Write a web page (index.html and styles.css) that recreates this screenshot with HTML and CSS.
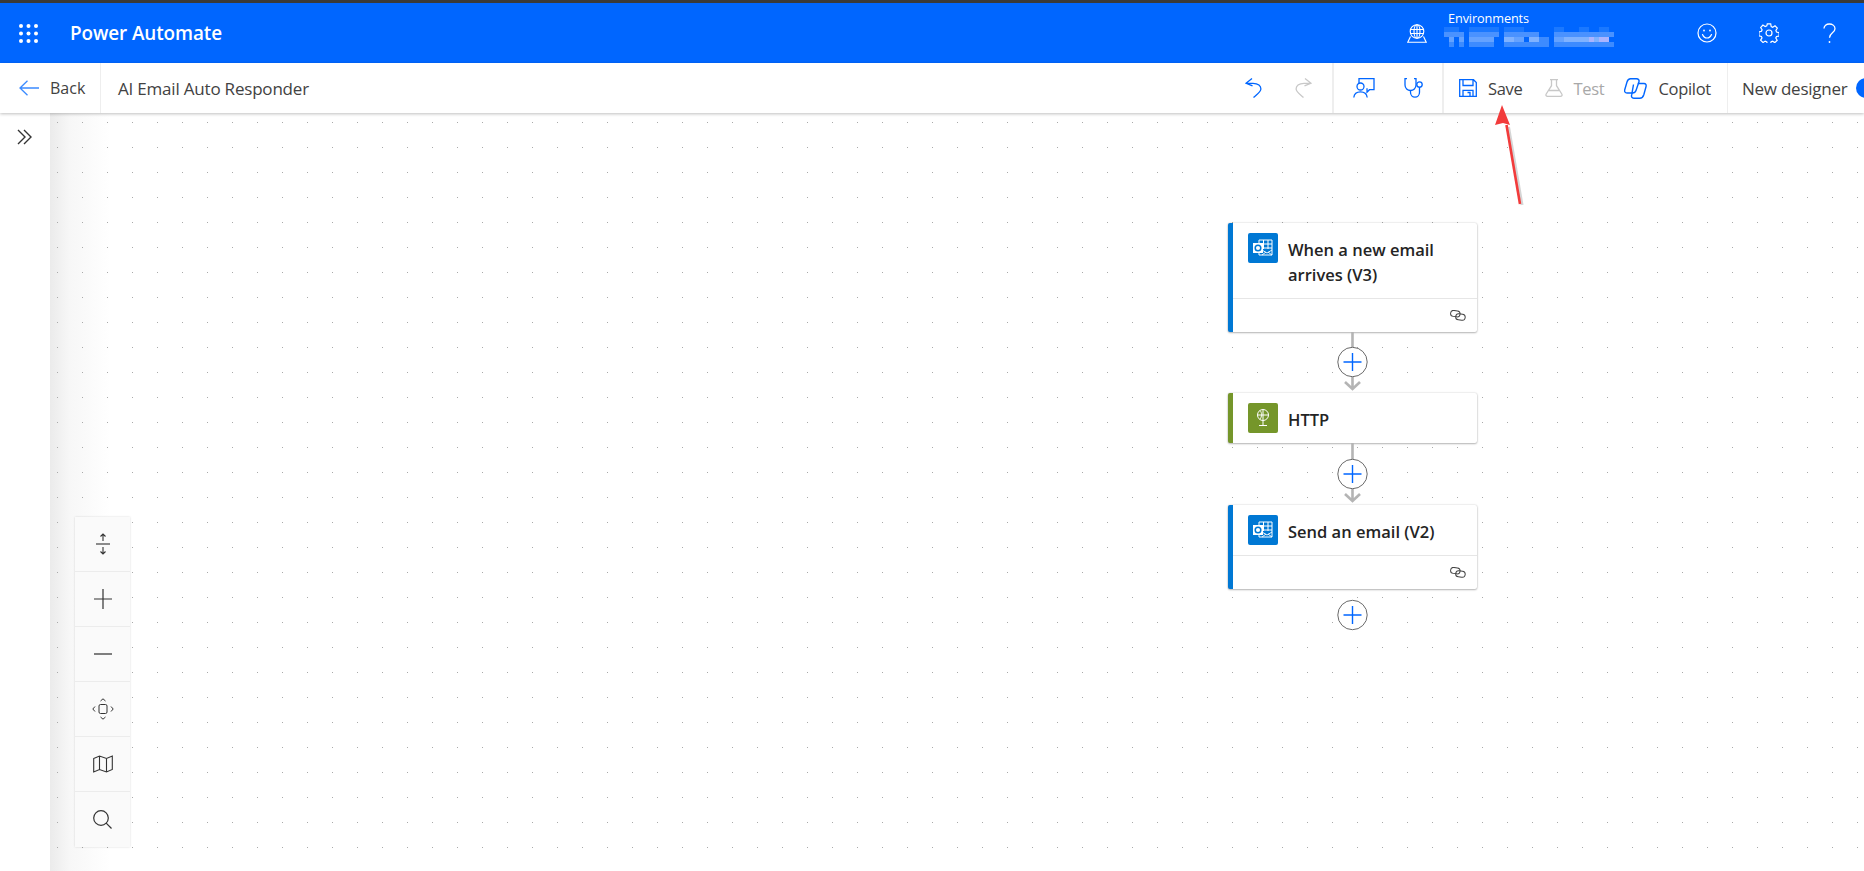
FILE: index.html
```html
<!DOCTYPE html>
<html lang="en">
<head>
<meta charset="utf-8">
<title>Power Automate</title>
<link rel="stylesheet" href="styles.css">
</head>
<body>
<div class="app">
  <div class="topstrip"></div>
  <header class="suite">
    <svg class="waffle" width="19" height="19" viewBox="0 0 19 19" fill="#fff"><circle cx="2" cy="2" r="2"/><circle cx="9.5" cy="2" r="2"/><circle cx="17" cy="2" r="2"/><circle cx="2" cy="9.5" r="2"/><circle cx="9.5" cy="9.5" r="2"/><circle cx="17" cy="9.5" r="2"/><circle cx="2" cy="17" r="2"/><circle cx="9.5" cy="17" r="2"/><circle cx="17" cy="17" r="2"/></svg>
    <span class="brand">Power Automate</span>
    <svg class="env-icon" width="20" height="19" viewBox="0 0 20 19" fill="none" stroke="#fff" stroke-width="1.1"><circle cx="10" cy="7.5" r="6.8"/><ellipse cx="10" cy="7.5" rx="3" ry="6.8"/><path d="M3.4 5.5h13.2M3.4 9.5h13.2M10 .7v13.6M3.5 12.5L.8 18.2h18.4l-2.7-5.7"/></svg>
    <div class="env">
      <span class="env-label">Environments</span>
      <svg class="env-blur" width="175" height="20" viewBox="0 0 35 4" shape-rendering="crispEdges">
        <g fill="#1a78ff"><rect x="0" y="0" width="3" height="1"/><rect x="5" y="0" width="6" height="1"/><rect x="12" y="0" width="4" height="1"/><rect x="22" y="0" width="2" height="1"/><rect x="27" y="0" width="2" height="1"/><rect x="31" y="0" width="2" height="1"/></g>
        <g fill="#4a92ff"><rect x="0" y="1" width="4" height="1"/><rect x="5" y="1" width="6" height="1"/><rect x="12" y="1" width="7" height="1"/><rect x="22" y="1" width="6" height="1"/><rect x="28" y="1" width="3" height="1"/><rect x="31" y="1" width="3" height="1"/></g>
        <g fill="#64a2ff"><rect x="1" y="2" width="1" height="1"/><rect x="3" y="2" width="1" height="1"/><rect x="5" y="2" width="3" height="1"/><rect x="8" y="2" width="2" height="1"/><rect x="13" y="2" width="3" height="1"/><rect x="22" y="2" width="2" height="1"/></g>
        <g fill="#7fb2ff"><rect x="12" y="2" width="2" height="1"/><rect x="17" y="2" width="2" height="1"/><rect x="24" y="2" width="2" height="1"/><rect x="26" y="2" width="3" height="1"/><rect x="30" y="2" width="1" height="1"/></g>
        <g fill="#aab4ff"><rect x="29" y="2" width="1" height="1"/><rect x="31" y="2" width="2" height="1"/></g>
        <g fill="#3d8bff"><rect x="19" y="2" width="2" height="1"/><rect x="1" y="3" width="1" height="1"/><rect x="3" y="3" width="1" height="1"/><rect x="5" y="3" width="5" height="1"/><rect x="12" y="3" width="9" height="1"/><rect x="22" y="3" width="12" height="1"/></g>
      </svg>
    </div>
    <svg class="smile" width="20" height="20" viewBox="0 0 20 20" fill="none" stroke="#fff" stroke-width="1.2"><circle cx="10" cy="10" r="9"/><path d="M5.5 11.5c1 2.4 2.6 3.5 4.5 3.5s3.500-1.100 4.500-3.500" stroke-linecap="round"/><circle cx="7" cy="7.500" r=".9" fill="#fff" stroke="none"/><circle cx="13" cy="7.500" r=".9" fill="#fff" stroke="none"/></svg>
    <svg class="gear" width="20" height="20" viewBox="0 0 20 20" fill="none" stroke="#fff" stroke-width="1.200"><circle cx="10" cy="10" r="3"/><path d="M8.300.9h3.400l.5 2.600 1.500.7 2.300-1.400 2.300 2.400-1.400 2.200.6 1.600 2.600.6v3.400l-2.600.5-.7 1.500 1.400 2.300-2.400 2.300-2.200-1.400-1.500.6-.6 2.600H8.300l-.5-2.600-1.600-.7-2.200 1.400-2.400-2.300 1.400-2.300-.6-1.500-2.500-.6V8.800l2.600-.5.6-1.600-1.400-2.200L3.900 2.100l2.300 1.400 1.600-.6z"/></svg>
    <svg class="help" width="13" height="21" viewBox="0 0 13 21" fill="none" stroke="#fff" stroke-width="1.300"><path d="M1 5.500C1 2.700 3.400 1 6.300 1s5.700 1.700 5.700 4.800c0 4-5.500 4.200-5.500 9"/><circle cx="6.500" cy="19" r=".9" fill="#fff" stroke="none"/></svg>
  </header>
  <nav class="toolbar">
    <button class="back">
      <svg width="20" height="16" viewBox="0 0 20 16" fill="none" stroke="#3b8bff" stroke-width="1.300"><path d="M20 8H1M8.500.7L1 8l7.500 7.300"/></svg>
      <span>Back</span>
    </button>
    <span class="flowname">AI Email Auto Responder</span>
    <div class="tools undo-tools">
      <svg class="ic" width="17" height="20" viewBox="0 0 17 20" fill="none" stroke="#0066ff" stroke-width="1.300"><path d="M7 .6L1 5.200l6.500 2.600M1.200 5.300H8c5 0 8.300 2.700 7.800 6.200-.4 2.700-4 5-7.300 8"/></svg>
      <svg class="ic" width="17" height="20" viewBox="0 0 17 20" fill="none" stroke="#c8c8c8" stroke-width="1.300"><path d="M10 .6l6 4.600-6.500 2.600M15.800 5.300H9c-5 0-8.300 2.700-7.800 6.200.4 2.700 4 5 7.300 8"/></svg>
    </div>
    <div class="tools check-tools">
      <svg class="ic" width="22" height="20" viewBox="0 0 22 20" fill="none" stroke="#0066ff" stroke-width="1.300"><path d="M6 5V.7h15v11h-4.500l-2.500 2.500v-4"/><circle cx="7.500" cy="8.500" r="3.500"/><path d="M.8 19.500c.4-3.800 3-5.600 6.700-5.600s6.200 1.800 6.700 5.600"/></svg>
      <svg class="ic" width="21" height="20" viewBox="0 0 21 20" fill="none" stroke="#0066ff" stroke-width="1.300"><path d="M3 .7H1v6.300c0 3.200 2.500 5.500 5.500 5.500S12 10.200 12 7V.7h-2"/><path d="M6.500 12.500v1.700c0 2.900 2 5 4.500 5s4.500-2.100 4.500-5V9"/><circle cx="15.500" cy="6.500" r="2.700"/></svg>
    </div>
    <div class="actions">
      <button class="act save">
        <svg width="18" height="18" viewBox="0 0 18 18" fill="none" stroke="#0066ff" stroke-width="1.300"><path d="M.7.7h13.800l2.800 2.800v13.800H.7zM4 .7v5.800h10V.7M4 17.300v-6h10v6M8.500 13.500h2.500v3.800"/></svg>
        <span>Save</span>
      </button>
      <button class="act test">
        <svg width="18" height="18" viewBox="0 0 18 18" fill="none" stroke="#c8c8c8" stroke-width="1.300"><path d="M5 .7h8M6.500.7v6L1.200 15c-.7 1.200 0 2.300 1.300 2.300h13c1.300 0 2-1.100 1.300-2.300L11.500 6.700v-6M4 11.500h10"/></svg>
        <span>Test</span>
      </button>
      <button class="act copilot">
        <svg width="23" height="21" viewBox="0 0 23 21" fill="none" stroke="#0066ff" stroke-width="1.400"><path d="M6.500.8h6c2 0 3 1.500 2.400 3.200L12 12.500c-.6 1.700-2 2.500-3.500 2.500H3c-2 0-2.800-1.500-2.200-3.500L3 4C3.600 2 4.700.8 6.500.8z"/><path d="M13.800 5.500H20c1.700 0 2.500 1.500 2 3.300l-2.200 8c-.6 2-2 3.400-4 3.400h-6c-2 0-2.700-1.500-2.100-3.300L9.500 6.500"/></svg>
        <span>Copilot</span>
      </button>
    </div>
    <div class="designer">
      <span>New designer</span>
      <span class="toggle"></span>
    </div>
  </nav>
  <div class="workspace">
    <aside class="rail">
      <svg width="15" height="16" viewBox="0 0 15 16" fill="none" stroke="#333" stroke-width="1.400"><path d="M1 1l7 7-7 7M7 1l7 7-7 7"/></svg>
    </aside>
    <main class="canvas">
      <div class="flow">
        <article class="card card-blue tall">
          <div class="card-head">
            <span class="tile tile-blue"><svg width="22" height="22" viewBox="0 0 22 22"><path d="M7 3h13v15H7z" fill="none" stroke="#fff" stroke-width="1"/><path d="M7 7h13M7 11h13M11.500 3v9M16 3v9" stroke="#fff" stroke-width="1" fill="none"/><path d="M10 13l5 3 5-3M10 18l4-3M20 18l-4-3" stroke="#fff" fill="none" stroke-width=".9"/><rect x="1" y="6" width="10" height="10" fill="#fff"/><circle cx="6" cy="11" r="2.800" fill="none" stroke="#0078d4" stroke-width="1.500"/></svg></span>
            <h3>When a new email arrives (V3)</h3>
          </div>
          <div class="card-foot"><svg width="16" height="11" viewBox="0 0 16 11" fill="none" stroke="#444" stroke-width="1"><rect x=".6" y=".6" width="9.500" height="6" rx="3" transform="rotate(8 5 3.500)"/><rect x="5.700" y="4" width="9.500" height="6" rx="3" transform="rotate(8 10 7)"/></svg></div>
        </article>
        <svg class="link" width="249" height="61" viewBox="0 0 249 61" fill="none"><path d="M124.500 0v57M117 50l7.500 7 7.500-7" stroke="#b4b4b4" stroke-width="2.600"/><circle cx="124.500" cy="30" r="14.700" fill="#fff" stroke="#6a6a6a" stroke-width="1"/><path d="M124.500 21v18M115.500 30h18" stroke="#0066ff" stroke-width="1.400"/></svg>
        <article class="card card-green">
          <div class="card-head">
            <span class="tile tile-green"><svg width="16" height="20" viewBox="0 0 16 20" fill="none" stroke="#fff" stroke-width="1"><circle cx="8" cy="7" r="5.500"/><path d="M2.500 7h11M8 1.500v11M5 2.500c2 2 2 6 0 9M4 17.500h8M8 13v4.500" /></svg></span>
            <h3>HTTP</h3>
          </div>
        </article>
        <svg class="link" width="249" height="62" viewBox="0 0 249 62" fill="none"><path d="M124.500 0v58M117 51l7.500 7 7.500-7" stroke="#b4b4b4" stroke-width="2.600"/><circle cx="124.500" cy="31" r="14.700" fill="#fff" stroke="#6a6a6a" stroke-width="1"/><path d="M124.500 22v18M115.500 31h18" stroke="#0066ff" stroke-width="1.400"/></svg>
        <article class="card card-blue">
          <div class="card-head">
            <span class="tile tile-blue"><svg width="22" height="22" viewBox="0 0 22 22"><path d="M7 3h13v15H7z" fill="none" stroke="#fff" stroke-width="1"/><path d="M7 7h13M7 11h13M11.500 3v9M16 3v9" stroke="#fff" stroke-width="1" fill="none"/><path d="M10 13l5 3 5-3M10 18l4-3M20 18l-4-3" stroke="#fff" fill="none" stroke-width=".9"/><rect x="1" y="6" width="10" height="10" fill="#fff"/><circle cx="6" cy="11" r="2.800" fill="none" stroke="#0078d4" stroke-width="1.500"/></svg></span>
            <h3>Send an email (V2)</h3>
          </div>
          <div class="card-foot short"><svg width="16" height="11" viewBox="0 0 16 11" fill="none" stroke="#444" stroke-width="1"><rect x=".6" y=".6" width="9.500" height="6" rx="3" transform="rotate(8 5 3.500)"/><rect x="5.700" y="4" width="9.500" height="6" rx="3" transform="rotate(8 10 7)"/></svg></div>
        </article>
        <svg class="link last" width="249" height="42" viewBox="0 0 249 42" fill="none"><circle cx="124.500" cy="26" r="14.700" fill="#fff" stroke="#6a6a6a" stroke-width="1"/><path d="M124.500 17v18M115.500 26h18" stroke="#0066ff" stroke-width="1.400"/></svg>
      </div>
      <div class="zoom-panel">
        <button><svg width="14" height="22" viewBox="0 0 14 22" fill="none" stroke="#333" stroke-width="1.100"><path d="M0 11h14" stroke="#666" stroke-width="1.500"/><path d="M7 8V1M4.500 3.500L7 1l2.500 2.500M7 14v7M4.500 18.500L7 21l2.500-2.500"/></svg></button>
        <button><svg width="18" height="20" viewBox="0 0 18 20" fill="none" stroke="#333" stroke-width="1.200"><path d="M9 0v20M0 10h18"/></svg></button>
        <button><svg width="18" height="4" viewBox="0 0 18 4" fill="none" stroke="#555" stroke-width="1.500"><path d="M0 2h18"/></svg></button>
        <button><svg width="22" height="22" viewBox="0 0 22 22" fill="none" stroke="#333" stroke-width="1"><rect x="7" y="6.500" width="8" height="9" rx="1.500"/><path d="M8.500 3L11 .8 13.500 3M8.500 19l2.500 2.200 2.500-2.200M3 8.500L.8 11 3 13.500M19 8.500l2.200 2.500-2.200 2.500"/></svg></button>
        <button><svg width="20" height="18" viewBox="0 0 20 18" fill="none" stroke="#333" stroke-width="1.100"><path d="M.7 3.500L6.500 1l7 2.500L19.300 1v13.500L13.500 17l-7-2.500L.7 17zM6.500 1v13.500M13.500 3.500V17"/></svg></button>
        <button><svg width="19" height="19" viewBox="0 0 19 19" fill="none" stroke="#333" stroke-width="1.200"><circle cx="8" cy="8" r="7.300"/><path d="M13.200 13.200l5.300 5.300"/></svg></button>
      </div>
    </main>
  </div>
  <svg class="callout" width="40" height="110" viewBox="0 0 40 110" fill="none"><path d="M19.500 24l13.500 78" stroke="#b9b9b9" stroke-width="3" opacity=".6"/><path d="M17.500 22L31 101" stroke="#f23b3b" stroke-width="2.600"/><path d="M13 2L6 22l8-2 7 2z" fill="#f23b3b"/></svg>
</div>
</body>
</html>
```
FILE: styles.css
```css
* { box-sizing: border-box; }
html, body { margin: 0; height: 100%; }
body { font-family: "Open Sans", "Noto Sans", sans-serif; overflow: hidden; background: #fff; }
button { font: inherit; background: none; border: 0; padding: 0; color: inherit; }
svg { display: block; flex: none; }

.app { position: relative; display: flex; flex-direction: column; width: 1864px; height: 871px; overflow: hidden; }
.topstrip { height: 3px; background: #3a3a3a; flex: none; }

.suite { flex: none; height: 60px; display: flex; align-items: center; background: #0066ff; color: #fff; padding-left: 19px; }
.brand { margin-left: 32px; width: 152px; font-size: 18.900px; font-weight: 600; letter-spacing: -.1px; white-space: nowrap; }
.env-icon { margin-left: 1185px; }
.env { margin-left: 17px; width: 233px; height: 44px; display: flex; flex-direction: column; padding-top: 2px; margin-top: -6px; }
.env-label { font-size: 12.700px; line-height: 17px; padding-left: 4px; letter-spacing: -.1px; }
.env-blur { margin-top: 0; }
.smile { margin-left: 20px; }
.gear { margin-left: 42px; }
.help { margin-left: 44px; }

.toolbar { position: relative; z-index: 2; flex: none; height: 50px; display: flex; align-items: center; background: #fff; box-shadow: 0 1px 3px rgba(0,0,0,.25); color: #424242; font-size: 16px; }
.toolbar > * { flex: none; }
.back { width: 101px; height: 50px; display: flex; align-items: center; gap: 11px; padding-left: 19px; border-right: 1px solid #eee; }
.flowname { margin-left: 17px; padding-top: 1px; font-size: 17px; letter-spacing: -.2px; width: 1127px; white-space: nowrap; }
.tools { height: 50px; display: flex; align-items: center; border-right: 2px solid #eee; }
.undo-tools { width: 89px; gap: 33px; }
.check-tools { width: 110px; gap: 29px; padding-left: 19px; }
.actions { width: 284px; height: 50px; display: flex; align-items: center; padding-left: 15px; border-right: 1px solid #eee; }
.act { display: flex; align-items: center; gap: 11px; font-size: 16.500px; letter-spacing: -.3px; }
.test { margin-left: 22px; color: #a8a8a8; }
.copilot { margin-left: 20px; color: #424242; }
.designer { display: flex; align-items: center; padding-left: 14px; font-size: 17px; letter-spacing: -.25px; white-space: nowrap; }
.toggle { width: 40px; height: 20px; margin-left: 9px; border-radius: 10px; background: #0066ff; flex: none; }

.workspace { flex: 1; display: flex; min-height: 0; }
.rail { width: 50px; flex: none; background: #fff; padding: 16px 0 0 17px; }
.canvas { position: relative; flex: 1; background-color: #fff; background-image: radial-gradient(circle at 7.500px 9.500px, #aaa 0, #aaa .6px, transparent 1px), linear-gradient(90deg, #ebebeb 0, #f7f7f7 20px, #fff 60px, #fff 100%); background-size: 25px 25px, 100% 100%; }

.flow { position: absolute; left: 1178px; top: 110px; width: 249px; display: flex; flex-direction: column; }
.card { width: 249px; background: #fff; border-left: 5px solid; box-shadow: 0 0 2px rgba(0,0,0,.2), 0 1px 2px rgba(0,0,0,.25); border-radius: 2px; }
.card-blue { border-left-color: #0078d4; }
.card-green { border-left-color: #75962a; }
.card-head { display: flex; gap: 10px; padding: 10px 10px 0 15px; min-height: 50px; }
.tall .card-head { min-height: 75px; }
.card-head h3 { margin: 0; padding-top: 4px; font-size: 16.500px; line-height: 25px; font-weight: 600; color: #242424; }
.tile { width: 30px; height: 30px; border-radius: 2px; display: flex; align-items: center; justify-content: center; flex: none; }
.tile-blue { background: #0078d4; }
.tile-green { background: #75962a; }
.card-foot { height: 34px; border-top: 1px solid #e6e6e6; display: flex; align-items: center; justify-content: flex-end; padding-right: 11px; }
.card-foot.short { height: 34px; }

.zoom-panel { position: absolute; left: 25px; top: 404px; width: 55px; display: flex; flex-direction: column; background: #fafafa; box-shadow: 0 0 2px rgba(0,0,0,.15); }
.zoom-panel button { height: 55px; display: flex; align-items: center; justify-content: center; border-top: 1px solid #ececec; }
.zoom-panel button:first-child { height: 54px; border-top: 0; }
.zoom-panel button:last-child { height: 56px; }

.callout { position: absolute; left: 1489px; top: 103px; z-index: 3; }
```
